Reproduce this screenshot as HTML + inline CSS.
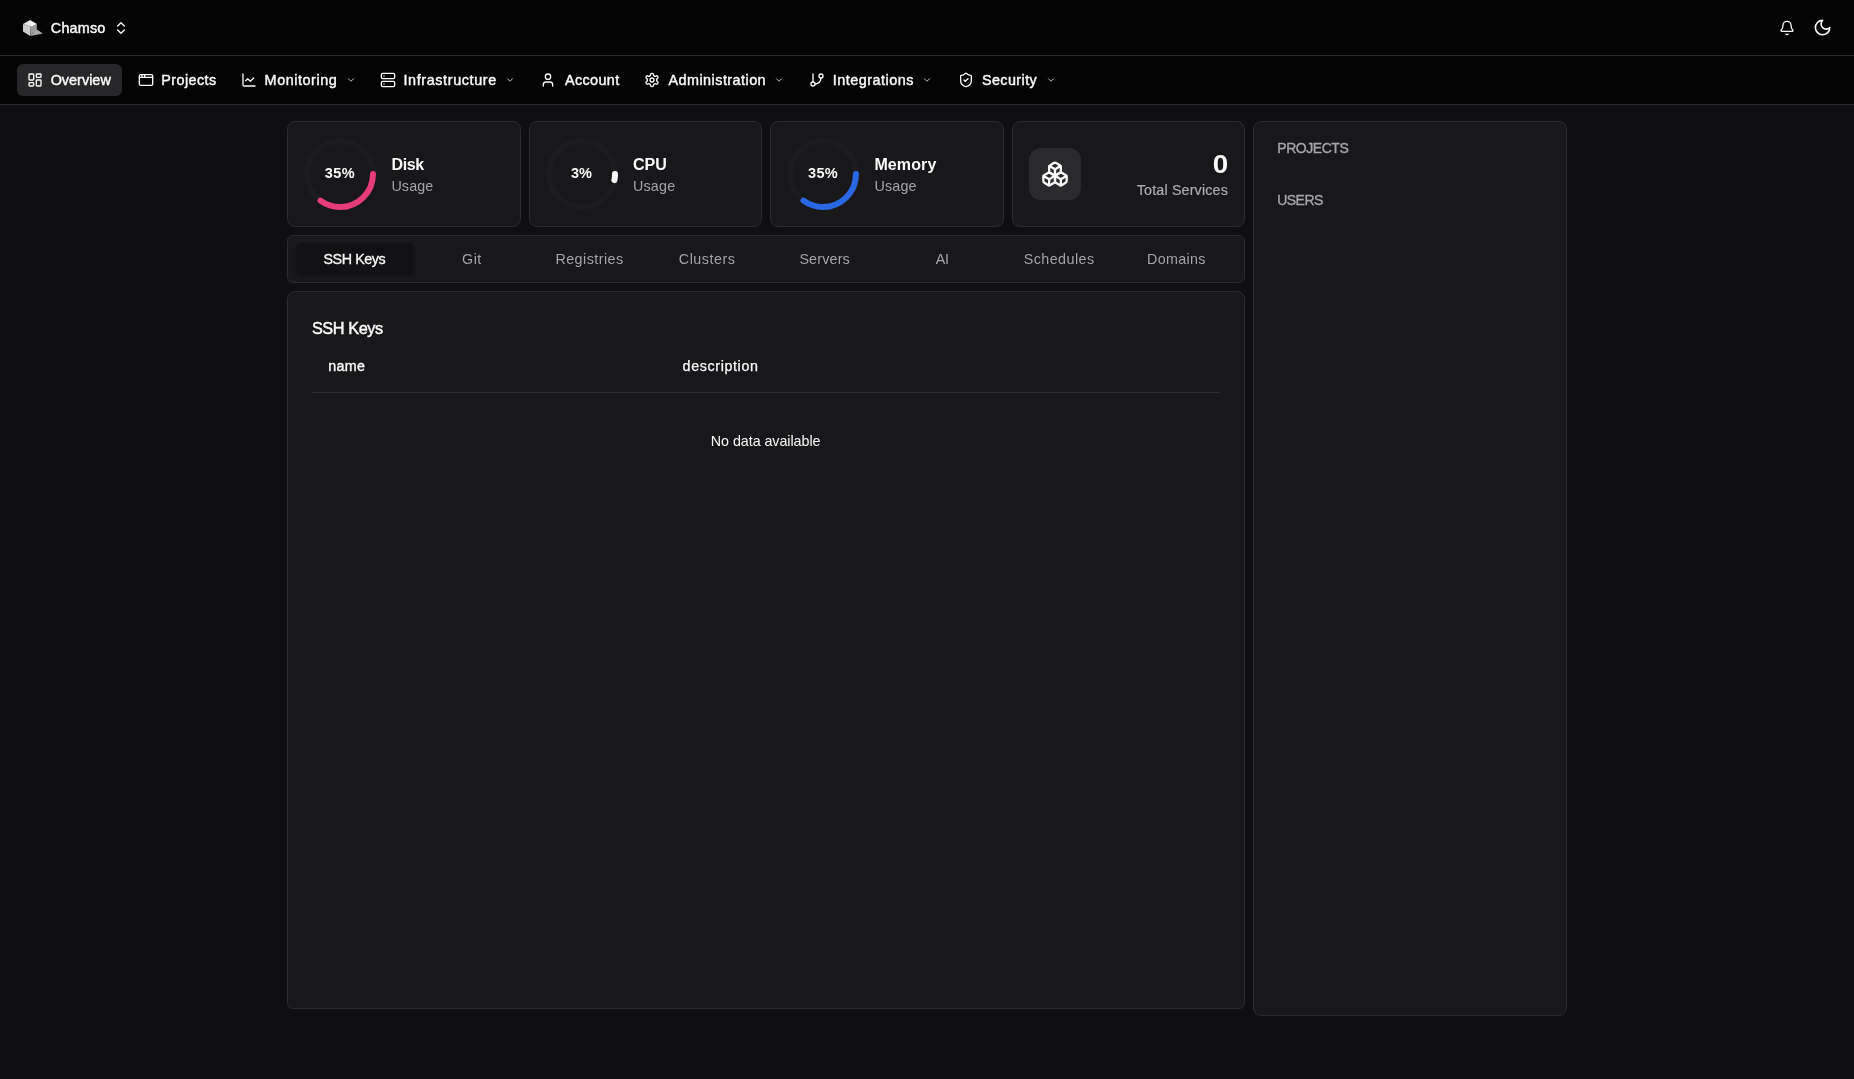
<!DOCTYPE html>
<html lang="en">
<head>
<meta charset="utf-8">
<title>Overview</title>
<style>
*{box-sizing:border-box;margin:0;padding:0}
html,body{width:1854px;height:1079px;overflow:hidden}
body{background:#0f0f11;color:#fafafa;font-family:"Liberation Sans",sans-serif;font-size:14px;position:relative}
.abs{position:absolute}
svg{display:block}
.ico{position:absolute;fill:none;stroke:#fafafa;stroke-width:2;stroke-linecap:round;stroke-linejoin:round}
.t{position:absolute;white-space:nowrap;line-height:1}
#root{position:absolute;left:0;top:0;width:1854px;height:1079px;will-change:transform}
/* header */
#hdr{position:absolute;left:0;top:0;width:1854px;height:56px;background:#040404;border-bottom:1px solid #2a2a2d}
#nav{position:absolute;left:0;top:56px;width:1854px;height:49px;background:#040404;border-bottom:1px solid #2a2a2d}
.nv{font-size:14.4px;color:#fafafa;-webkit-text-stroke:0.42px #fafafa}
#ovw{position:absolute;left:17px;top:64px;width:105px;height:32px;background:#27272a;border-radius:6px}
/* cards */
.card{position:absolute;background:#18181b;border:1px solid #2b2b2e;border-radius:8px}
.muted{color:#a3a3a8}
.tb{top:252px;font-size:14.3px;color:#a3a3a8}
.tb.on{color:#fafafa;-webkit-text-stroke:0.3px #fafafa}
</style>
</head>
<body>
<div id="root">
<!-- top header -->
<div id="hdr"></div>
<div id="nav"></div>

<!-- logo -->
<svg class="abs" style="left:22px;top:19px" width="22" height="18" viewBox="0 0 22 18">
  <polygon points="14.8,10.6 20.9,14.4 8.2,17" fill="#adadad"/>
  <polygon points="1,4.9 8.8,7.8 8.2,17 1,12.6" fill="#cdcdcd"/>
  <polygon points="8.8,7.8 14.8,4.9 14.8,10.8 8.2,17" fill="#9c9c9c"/>
  <polygon points="8.200,0.950 14.8,4.9 8.8,7.8 1,4.9" fill="#e4e8e7"/>
  <polygon points="8.6,2.4 14.2,5 9,7.400" fill="#fbfbfb"/>
</svg>
<div class="t nv" style="left:50.87px;top:21px;font-size:14.4px;letter-spacing:0.159px">Chamso</div>
<svg class="ico" style="left:112.5px;top:20px" width="16" height="16" viewBox="0 0 24 24"><path d="m7 15 5 5 5-5"/><path d="m7 9 5-5 5 5"/></svg>

<!-- bell / moon -->
<svg class="ico" style="left:1779px;top:20px" width="16" height="16" viewBox="0 0 24 24"><path d="M10.268 21a2 2 0 0 0 3.464 0"/><path d="M3.262 15.326A1 1 0 0 0 4 17h16a1 1 0 0 0 .74-1.673C19.41 13.956 18 12.499 18 8A6 6 0 0 0 6 8c0 4.499-1.411 5.956-2.738 7.326"/></svg>
<svg class="ico" style="left:1813px;top:18.4px" width="19.2" height="19.2" viewBox="0 0 24 24"><path d="M12 3a6 6 0 0 0 9 9 9 9 0 1 1-9-9Z"/></svg>

<!-- nav items -->
<div id="ovw"></div>
<svg class="ico" style="left:27px;top:72px" width="16" height="16" viewBox="0 0 24 24"><rect width="7" height="9" x="3" y="3" rx="1"/><rect width="7" height="5" x="14" y="3" rx="1"/><rect width="7" height="9" x="14" y="12" rx="1"/><rect width="7" height="5" x="3" y="16" rx="1"/></svg>
<div class="t nv" style="left:50.64px;top:73px;letter-spacing:0.028px">Overview</div>

<svg class="ico" style="left:138px;top:72px" width="16" height="16" viewBox="0 0 24 24"><rect x="2" y="4" width="20" height="16" rx="2"/><path d="M10 4v4"/><path d="M2 8h20"/><path d="M6 4v4"/></svg>
<div class="t nv" style="left:161.15px;top:73px;letter-spacing:0.448px">Projects</div>

<svg class="ico" style="left:241px;top:72px" width="16" height="16" viewBox="0 0 24 24"><path d="M3 3v16a2 2 0 0 0 2 2h16"/><path d="m19 9-5 5-4-4-3 3"/></svg>
<div class="t nv" style="left:264.61px;top:73px;letter-spacing:0.546px">Monitoring</div>
<svg class="ico" style="left:346.1px;top:75.4px;stroke:#e4e4e7" width="10" height="10" viewBox="0 0 24 24"><path d="m6 9 6 6 6-6"/></svg>

<svg class="ico" style="left:380px;top:72px" width="16" height="16" viewBox="0 0 24 24"><rect width="20" height="8" x="2" y="2" rx="2" ry="2"/><rect width="20" height="8" x="2" y="14" rx="2" ry="2"/><line x1="6" x2="6.01" y1="6" y2="6"/><line x1="6" x2="6.01" y1="18" y2="18"/></svg>
<div class="t nv" style="left:403.43px;top:73px;letter-spacing:0.618px">Infrastructure</div>
<svg class="ico" style="left:505.2px;top:75.4px;stroke:#e4e4e7" width="10" height="10" viewBox="0 0 24 24"><path d="m6 9 6 6 6-6"/></svg>

<svg class="ico" style="left:540px;top:72px" width="16" height="16" viewBox="0 0 24 24"><path d="M19 21v-2a4 4 0 0 0-4-4H9a4 4 0 0 0-4 4v2"/><circle cx="12" cy="7" r="4"/></svg>
<div class="t nv" style="left:564.98px;top:73px;letter-spacing:0.361px">Account</div>

<svg class="ico" style="left:644px;top:72px" width="16" height="16" viewBox="0 0 24 24"><path d="M12.22 2h-.44a2 2 0 0 0-2 2v.18a2 2 0 0 1-1 1.73l-.43.25a2 2 0 0 1-2 0l-.15-.08a2 2 0 0 0-2.73.73l-.22.38a2 2 0 0 0 .73 2.73l.15.1a2 2 0 0 1 1 1.72v.51a2 2 0 0 1-1 1.74l-.15.09a2 2 0 0 0-.73 2.73l.22.38a2 2 0 0 0 2.73.73l.15-.08a2 2 0 0 1 2 0l.43.25a2 2 0 0 1 1 1.73V20a2 2 0 0 0 2 2h.44a2 2 0 0 0 2-2v-.18a2 2 0 0 1 1-1.73l.43-.25a2 2 0 0 1 2 0l.15.08a2 2 0 0 0 2.73-.73l.22-.39a2 2 0 0 0-.73-2.73l-.15-.08a2 2 0 0 1-1-1.74v-.5a2 2 0 0 1 1-1.74l.15-.09a2 2 0 0 0 .73-2.73l-.22-.38a2 2 0 0 0-2.73-.73l-.15.08a2 2 0 0 1-2 0l-.43-.25a2 2 0 0 1-1-1.73V4a2 2 0 0 0-2-2z"/><circle cx="12" cy="12" r="3"/></svg>
<div class="t nv" style="left:668.51px;top:73px;letter-spacing:0.457px">Administration</div>
<svg class="ico" style="left:774.2px;top:75.4px;stroke:#e4e4e7" width="10" height="10" viewBox="0 0 24 24"><path d="m6 9 6 6 6-6"/></svg>

<svg class="ico" style="left:809px;top:72px" width="16" height="16" viewBox="0 0 24 24"><line x1="6" x2="6" y1="3" y2="15"/><circle cx="18" cy="6" r="3"/><circle cx="6" cy="18" r="3"/><path d="M18 9a9 9 0 0 1-9 9"/></svg>
<div class="t nv" style="left:832.63px;top:73px;letter-spacing:0.518px">Integrations</div>
<svg class="ico" style="left:922.3px;top:75.4px;stroke:#e4e4e7" width="10" height="10" viewBox="0 0 24 24"><path d="m6 9 6 6 6-6"/></svg>

<svg class="ico" style="left:958px;top:72px" width="16" height="16" viewBox="0 0 24 24"><path d="M20 13c0 5-3.500 7.500-7.660 8.950a1 1 0 0 1-.67-.01C7.500 20.500 4 18 4 13V6a1 1 0 0 1 1-1c2 0 4.500-1.200 6.240-2.720a1.170 1.170 0 0 1 1.520 0C14.510 3.810 17 5 19 5a1 1 0 0 1 1 1z"/><path d="m9 12 2 2 4-4"/></svg>
<div class="t nv" style="left:981.91px;top:73px;letter-spacing:0.416px">Security</div>
<svg class="ico" style="left:1046.1px;top:75.4px;stroke:#e4e4e7" width="10" height="10" viewBox="0 0 24 24"><path d="m6 9 6 6 6-6"/></svg>

<!-- stat cards -->
<div class="card" style="left:287px;top:121px;width:234px;height:106px"></div>
<div class="card" style="left:529px;top:121px;width:233px;height:106px"></div>
<div class="card" style="left:770px;top:121px;width:234px;height:106px"></div>
<div class="card" style="left:1012px;top:121px;width:233px;height:106px"></div>

<!-- gauges -->
<svg class="abs" style="left:302px;top:136px" width="76" height="76" viewBox="0 0 76 76"><circle cx="38" cy="38" r="33" fill="none" stroke="#1c1c1f" stroke-width="6"/><circle cx="38" cy="38" r="33" fill="none" stroke="#e63c78" stroke-width="6" stroke-linecap="round" stroke-dasharray="72.6 300"/></svg>
<div class="t" style="letter-spacing:0.415px;left:324.80px;top:166px;font-size:14.5px;font-weight:bold;transform:scaleY(1.07);transform-origin:50% 85%">35%</div>
<div class="t" style="left:391.58px;top:156.500px;font-size:16px;font-weight:bold;letter-spacing:-0.393px">Disk</div>
<div class="t muted" style="left:391.40px;top:179px;font-size:14.3px;letter-spacing:0.136px">Usage</div>

<svg class="abs" style="left:544px;top:136px" width="76" height="76" viewBox="0 0 76 76"><circle cx="38" cy="38" r="33" fill="none" stroke="#1c1c1f" stroke-width="6"/><circle cx="38" cy="38" r="33" fill="none" stroke="#fafafa" stroke-width="6" stroke-linecap="round" stroke-dasharray="6.2 300"/></svg>
<div class="t" style="left:571px;top:166px;font-size:14.5px;font-weight:bold;transform:scaleY(1.07);transform-origin:50% 85%">3%</div>
<div class="t" style="left:632.94px;top:156.500px;font-size:16px;font-weight:bold;letter-spacing:0.054px">CPU</div>
<div class="t muted" style="left:633px;top:179px;font-size:14.3px;letter-spacing:0.2px">Usage</div>

<svg class="abs" style="left:785px;top:136px" width="76" height="76" viewBox="0 0 76 76"><circle cx="38" cy="38" r="33" fill="none" stroke="#1c1c1f" stroke-width="6"/><circle cx="38" cy="38" r="33" fill="none" stroke="#2968e2" stroke-width="6" stroke-linecap="round" stroke-dasharray="72.6 300"/></svg>
<div class="t" style="letter-spacing:0.315px;left:808.10px;top:166px;font-size:14.5px;font-weight:bold;transform:scaleY(1.07);transform-origin:50% 85%">35%</div>
<div class="t" style="left:874.38px;top:156.500px;font-size:16px;font-weight:bold;letter-spacing:0.110px">Memory</div>
<div class="t muted" style="left:874.50px;top:179px;font-size:14.3px;letter-spacing:0.186px">Usage</div>

<!-- total services -->
<div class="abs" style="left:1029px;top:148px;width:52px;height:52px;border-radius:12px;background:#2a2a2d"></div>
<svg class="ico" style="left:1041px;top:160px" width="28" height="28" viewBox="0 0 24 24"><path d="M2.970 12.920A2 2 0 0 0 2 14.630v3.240a2 2 0 0 0 .970 1.710l3 1.800a2 2 0 0 0 2.060 0L12 19v-5.500l-5-3-4.030 2.420Z"/><path d="m7 16.500-4.740-2.850"/><path d="m7 16.500 5-3"/><path d="M7 16.500v5.170"/><path d="M12 13.500V19l3.970 2.380a2 2 0 0 0 2.060 0l3-1.800a2 2 0 0 0 .970-1.710v-3.240a2 2 0 0 0-.970-1.710L17 10.500l-5 3Z"/><path d="m17 16.500-5-3"/><path d="m17 16.500 4.740-2.850"/><path d="M17 16.500v5.170"/><path d="M7.970 4.420A2 2 0 0 0 7 6.130v4.370l5 3 5-3V6.130a2 2 0 0 0-.970-1.710l-3-1.800a2 2 0 0 0-2.060 0l-3 1.800Z"/><path d="M12 8 7.260 5.150"/><path d="m12 8 4.740-2.850"/><path d="M12 13.500V8"/></svg>
<div class="t" style="right:626.3px;top:152px;font-size:25.5px;font-weight:bold;transform:scaleX(1.09);transform-origin:100% 50%">0</div>
<div class="t muted" style="right:626px;top:183px;font-size:14.3px;color:#ababb0;-webkit-text-stroke:0.2px #ababb0;letter-spacing:0.16px">Total Services</div>

<!-- tabs -->
<div class="card" style="left:287px;top:235px;width:958px;height:48px;border-radius:6px"></div>
<div class="abs" style="left:296px;top:243px;width:118px;height:32px;background:#111113;border-radius:5px;box-shadow:0 1px 2px rgba(0,0,0,.25)"></div>
<div class="t tb on" style="left:323.48px;letter-spacing:-0.420px">SSH Keys</div>
<div class="t tb" style="letter-spacing:0.536px;left:461.99px">Git</div>
<div class="t tb" style="left:555.40px;letter-spacing:0.471px">Registries</div>
<div class="t tb" style="left:678.81px;letter-spacing:0.516px">Clusters</div>
<div class="t tb" style="left:799.39px;letter-spacing:0.181px">Servers</div>
<div class="t tb" style="left:935.84px;letter-spacing:-0.353px">AI</div>
<div class="t tb" style="left:1023.73px;letter-spacing:0.452px">Schedules</div>
<div class="t tb" style="left:1147.10px;letter-spacing:0.295px">Domains</div>

<!-- table panel -->
<div class="card" style="left:287px;top:291px;width:958px;height:718px;border-radius:8px 8px 6px 6px"></div>
<div class="t" style="left:311.90px;top:320px;font-size:16.3px;letter-spacing:-0.418px;-webkit-text-stroke:0.45px #fafafa">SSH Keys</div>
<div class="t" style="letter-spacing:0.317px;left:328.23px;top:359px;font-size:14.3px;-webkit-text-stroke:0.35px #fafafa">name</div>
<div class="t" style="left:682.60px;top:359px;font-size:14.3px;-webkit-text-stroke:0.25px #fafafa;letter-spacing:0.618px">description</div>
<div class="abs" style="left:312px;top:392px;width:908px;height:1px;background:#2e2e31"></div>
<div class="t" style="left:710.85px;top:434px;font-size:14.3px;letter-spacing:-0.054px">No data available</div>

<!-- right panel -->
<div class="card" style="left:1253px;top:121px;width:314px;height:895px"></div>
<div class="t muted" style="left:1277.26px;top:141px;font-size:14px;color:#a4a4aa;-webkit-text-stroke:0.35px #a4a4aa;letter-spacing:-0.444px">PROJECTS</div>
<div class="t muted" style="left:1277.32px;top:193px;font-size:14px;color:#a4a4aa;-webkit-text-stroke:0.35px #a4a4aa;letter-spacing:-0.572px">USERS</div>
</div>
</body>
</html>
